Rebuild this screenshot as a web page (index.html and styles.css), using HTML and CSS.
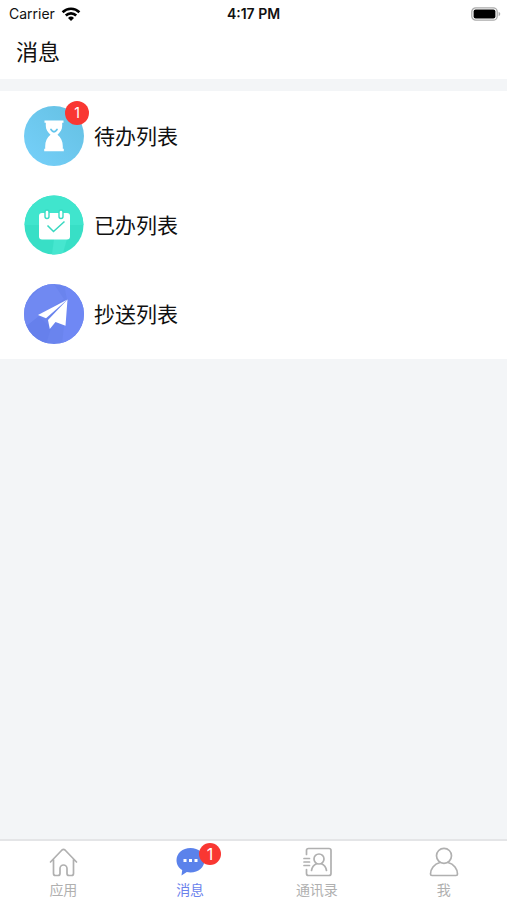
FILE: index.html
```html
<!DOCTYPE html>
<html lang="zh-CN">
<head>
<meta charset="utf-8">
<meta name="viewport" content="width=device-width, initial-scale=1">
<title>消息</title>
<link rel="stylesheet" href="styles.css">
</head>
<body>
<div class="status">
  <div class="carrier">
    <span>Carrier</span>
    <svg width="20" height="14" viewBox="0 0 20 14" aria-hidden="true">
      <g fill="none" stroke="#000" stroke-width="2.6">
        <path d="M1.6 5.200a12 12 0 0 1 16.800 0"/>
        <path d="M4.800 8.500a7.400 7.400 0 0 1 10.400 0"/>
      </g>
      <path d="M10 14l-3-3a4.300 4.300 0 0 1 6 0z"/>
    </svg>
  </div>
  <div class="time">4:17 PM</div>
  <div class="battery">
    <svg width="30" height="14" viewBox="0 0 30 14" aria-hidden="true">
      <rect x=".8" y=".8" width="25.4" height="12.4" rx="4" fill="#fff" stroke="#aaa" stroke-width="1.3"/>
      <rect x="2.6" y="2.6" width="21.8" height="8.8" rx="2"/>
      <path d="M27.600 4.800c2.200.8 2.200 3.600 0 4.400z" fill="#aaa"/>
    </svg>
  </div>
</div>
<header class="header"><h1>消息</h1></header>
<main class="main">
  <nav class="list" aria-label="消息列表">
    <a class="row" href="#todo">
      <span class="avatar">
        <svg viewBox="0 0 60 60" aria-hidden="true">
          <defs><linearGradient id="sky" x1="0" y1="1" x2="1" y2="0"><stop offset="0" stop-color="#76d0fa"/><stop offset="1" stop-color="#64c0e2"/></linearGradient></defs>
          <circle cx="30" cy="30" r="30" fill="url(#sky)"/>
          <path fill="#fff" d="M20.500 14.500h19v2.200h-1.300v3c0 4-2 6.500-4.700 9 3.500 3 5.300 6.500 5.300 11.500v2.600h1v2.400h-19.600v-2.400h1v-2.600c0-5 1.800-8.500 5.300-11.500-2.700-2.500-4.700-5-4.700-9v-3h-1.300z"/>
          <path fill="none" stroke="#62c4ec" stroke-width="1.8" stroke-linecap="round" d="M27 23.500q3 4.500 6 0"/>
        </svg>
        <span class="badge">1</span>
      </span>
      <span class="name">待办列表</span>
    </a>
    <a class="row" href="#done">
      <span class="avatar">
        <svg viewBox="0 0 60 60" aria-hidden="true">
          <circle cx="30" cy="30" r="29.500" fill="#38dfc6"/>
          <path fill="#40e5cd" d="M.5 30a29.500 29.500 0 0 1 59 0z"/>
          <path fill="#46e6cf" d="M30 44h13l-4 14a29.500 29.500 0 0 1-11 1.400z"/>
          <rect x="15" y="18" width="31" height="26.500" rx="3" fill="#fff"/>
          <g fill="#fff" stroke="#38dcc4" stroke-width="1.4">
            <rect x="21" y="15" width="4" height="8.500" rx="2"/>
            <rect x="35" y="15" width="4" height="8.500" rx="2"/>
          </g>
          <path fill="none" stroke="#38d8c0" stroke-width="1.5" d="M23.500 30.500l6 6 11-10"/>
        </svg>
      </span>
      <span class="name">已办列表</span>
    </a>
    <a class="row" href="#copied">
      <span class="avatar">
        <svg viewBox="0 0 60 60" aria-hidden="true">
          <defs><clipPath id="disc"><circle cx="30" cy="30" r="30"/></clipPath></defs>
          <g clip-path="url(#disc)">
            <path fill="#6a84ee" d="M0 0h60v60H0z"/>
            <path fill="#7089f2" d="M0 20L20 0h10l10 15-24 17L0 44z"/>
            <path fill="#6f88f4" d="M40 0h20v60H38l5-44z"/>
            <path fill="#6680ec" d="M0 44l15-12 12 12-5 16H0z"/>
          </g>
          <path fill="#fff" d="M43.500 15.500L14 31l8 3.200z"/>
          <path fill="#fff" d="M43.500 15.500L24 36l1.800 9 5.700-7 10 3.800z"/>
        </svg>
      </span>
      <span class="name">抄送列表</span>
    </a>
  </nav>
</main>
<nav class="tabs" aria-label="主导航">
  <a class="tab" href="#apps">
    <span class="glyph"><svg viewBox="0 0 30 30" aria-hidden="true">
      <path d="M2.500 15L14 3q1.500-1.200 3 0L28.500 15M5.500 12.500v14q0 2 2 2h2.500q2 0 2-2V21.500a3.500 3.500 0 0 1 7 0v5q0 2 2 2h2.500q2 0 2-2V12.500"/>
    </svg></span>
    <span>应用</span>
  </a>
  <a class="tab active" href="#messages" aria-current="page">
    <span class="glyph"><svg viewBox="0 0 30 30" aria-hidden="true">
      <path class="bubble" d="M15.500 1c8 0 14 5.300 14 12.200s-6 12.200-14 12.200c-1.300 0-2.500-.1-3.700-.4L6.500 28.500l.7-5.500C3.700 21 1.500 17.500 1.500 13.200 1.500 6.300 7.500 1 15.500 1z"/>
      <g class="dots"><rect x="8.500" y="12" width="3" height="3"/><rect x="14" y="12" width="3" height="3"/><rect x="19.500" y="12" width="3" height="3"/></g>
    </svg><span class="badge">1</span></span>
    <span>消息</span>
  </a>
  <a class="tab" href="#contacts">
    <span class="glyph"><svg viewBox="0 0 30 30" aria-hidden="true">
      <path d="M4.500 7.500V3.500q0-2 2-2H27q2 0 2 2v23q0 2-2 2H6.500q-2 0-2-2v-4M2 11.500h5.500M2 15h5.500M2 18.500h5.500"/>
      <circle cx="17" cy="12" r="5"/>
      <path d="M9.500 23.500c.6-3.700 2.500-5.800 5-6.800M24.500 23.500c-.6-3.700-2.500-5.800-5-6.800"/>
    </svg></span>
    <span>通讯录</span>
  </a>
  <a class="tab" href="#me">
    <span class="glyph"><svg viewBox="0 0 30 30" aria-hidden="true">
      <circle cx="15" cy="8.800" r="7.500"/>
      <path d="M11 15.500C5 17 1.500 22 1.500 27q0 1.500 1.500 1.500h24q1.500 0 1.500-1.500c0-5-3.500-10-9.500-11.500"/>
    </svg></span>
    <span>我</span>
  </a>
</nav>
</body>
</html>
```
FILE: styles.css
```css
* {
  box-sizing: border-box;
}

body {
  margin: 0;
  min-height: 100vh;
  display: flex;
  flex-direction: column;
  background: #f3f5f7;
  color: #111;
  font-family: Inter, "Noto Sans CJK SC", sans-serif;
}

a {
  color: inherit;
  text-decoration: none;
}

svg {
  display: block;
}

.status {
  display: grid;
  grid-template-columns: 1fr auto 1fr;
  align-items: center;
  height: 27px;
  padding: 0 6px;
  background: #fff;
  font-size: 14px;
}

.carrier {
  display: flex;
  align-items: center;
  gap: 6px;
  padding-left: 3px;
}

.time {
  font-weight: 600;
}

.battery {
  justify-self: end;
}

.header {
  padding: 9px 16px 11px;
  background: #fff;
}

.header h1 {
  margin: 0;
  font-size: 22px;
  font-weight: 400;
  line-height: 32px;
}

.main {
  flex: 1;
  padding-top: 12px;
}

.list {
  padding-bottom: 1px;
  background: #fff;
}

.row {
  display: flex;
  align-items: center;
  gap: 10px;
  padding: 15px 24px 14px;
  font-size: 21px;
  line-height: 30px;
}

.name {
  padding-top: 2px;
}

.avatar {
  position: relative;
  flex: none;
  width: 60px;
  height: 60px;
}

.badge {
  position: absolute;
  top: -5px;
  right: -5px;
  width: 24px;
  height: 24px;
  border-radius: 50%;
  background: #f93732;
  color: #fff;
  font-size: 14px;
  line-height: 24px;
  text-align: center;
}

.tabs {
  display: grid;
  grid-template-columns: repeat(4, 1fr);
  height: 61px;
  padding-top: 6px;
  border-top: 2px solid #e4e5e7;
  background: #fff;
}

.tab {
  display: flex;
  flex-direction: column;
  align-items: center;
  gap: 3px;
  color: #b0b0b0;
  font-size: 14px;
  line-height: 20px;
}

.active {
  color: #6b82ec;
}

.glyph {
  position: relative;
  width: 30px;
  height: 30px;
  fill: none;
  stroke: #b0b0b0;
  stroke-width: 1.7;
  stroke-linecap: round;
  stroke-linejoin: round;
}

.bubble {
  fill: #5b82eb;
  stroke: none;
}

.dots {
  fill: #fff;
  stroke: none;
}

.glyph .badge {
  top: -4px;
  right: -16px;
  width: 22px;
  height: 22px;
  font-size: 16px;
  line-height: 22px;
}
```
